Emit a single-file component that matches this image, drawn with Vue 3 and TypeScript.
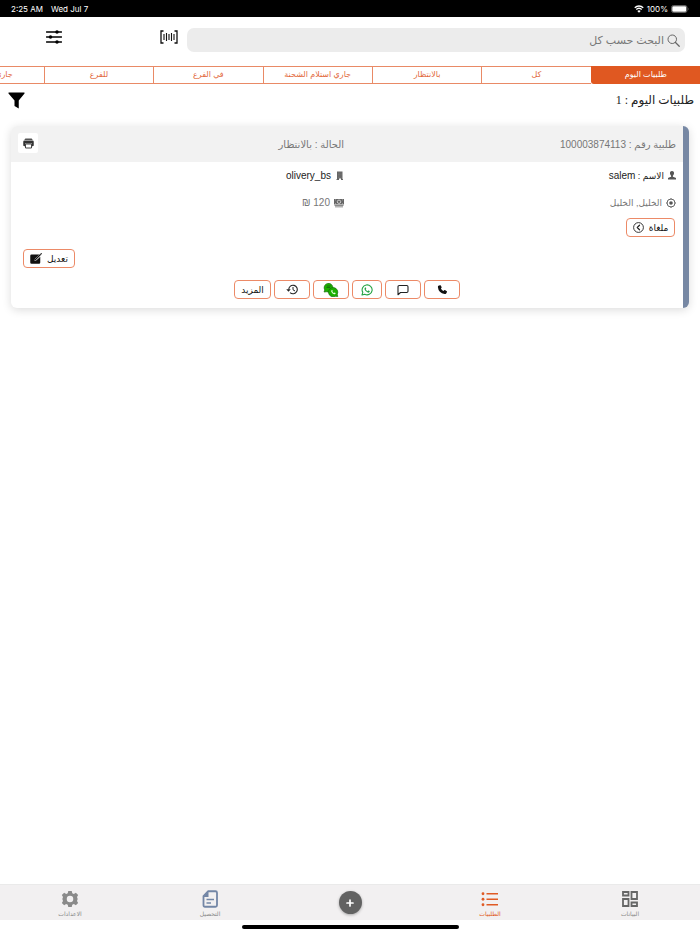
<script setup lang="ts">
import { ref } from 'vue'

interface NavItem {
  id: string
  label: string
}

const tabs: string[] = [
  'طلبيات اليوم',
  'كل',
  'بالانتظار',
  'جاري استلام الشحنة',
  'في الفرع',
  'للفرع',
  'جاري التوصيل',
]
const activeTab = ref(0)
const query = ref('')

const startItems: NavItem[] = [
  { id: 'data', label: 'البيانات' },
  { id: 'orders', label: 'الطلبيات' },
]
const endItems: NavItem[] = [
  { id: 'collect', label: 'التحصيل' },
  { id: 'settings', label: 'الاعدادات' },
]
</script>

<template>
  <div class="page" dir="rtl">
    <div class="status" dir="ltr">
      <span class="clock">2:25 AM</span>
      <span>Wed Jul 7</span>
      <span class="status-end">
        <svg width="10" height="8" viewBox="0 0 20 16" aria-hidden="true">
          <path d="M1.5 5.5a12 12 0 0 1 17 0M4.5 9a8 8 0 0 1 11 0" fill="none" stroke="#fff" stroke-width="2.6" />
          <path d="M10 15.5 6.6 12a4.8 4.8 0 0 1 6.8 0z" fill="#fff" />
        </svg>
        <span>100%</span>
        <svg width="18" height="8" viewBox="0 0 36 16" aria-hidden="true">
          <rect x="1" y="1" width="31" height="14" rx="4" fill="none" stroke="#888" stroke-width="1.4" />
          <rect x="2.500" y="2.500" width="28" height="11" rx="2.500" fill="#fff" />
          <path d="M34 5.500v5q2-2.500 0-5" fill="#888" />
        </svg>
      </span>
    </div>

    <header class="toolbar">
      <label class="search">
        <svg width="13" height="13" viewBox="0 0 26 26" aria-hidden="true">
          <circle cx="10.500" cy="10.500" r="8.500" fill="none" stroke="#666" stroke-width="2" />
          <path d="m17 17 7.500 7.500" stroke="#666" stroke-width="2.400" stroke-linecap="round" />
        </svg>
        <input v-model="query" type="search" placeholder="البحث حسب كل" aria-label="البحث حسب كل" />
      </label>
      <button class="plain scan" type="button" aria-label="مسح الباركود">
        <svg width="18" height="14" viewBox="0 0 36 28" fill="none" stroke="#111" stroke-width="2.600">
          <path d="M7 2H2v24h5M29 2h5v24h-5" />
          <path d="M8 8v12M13 6v16M18 8v12M23 6v16M28 8v12" stroke-width="2.200" />
        </svg>
      </button>
      <button class="plain" type="button" aria-label="خيارات">
        <svg width="16" height="14" viewBox="0 0 32 28" stroke="#000" stroke-width="2.800" stroke-linecap="round">
          <path d="M1 4h30M1 14h30M1 24h30" />
          <g stroke="none"><circle cx="22" cy="4" r="3.500" /><circle cx="9" cy="14" r="3.500" /><circle cx="22" cy="24" r="3.500" /></g>
        </svg>
      </button>
    </header>

    <nav class="tabs">
      <button
        v-for="(tab, i) in tabs"
        :key="tab"
        type="button"
        class="tab"
        :class="{ active: i === activeTab }"
        @click="activeTab = i"
      >{{ tab }}</button>
    </nav>

    <main>
      <div class="heading">
        <h1>طلبيات اليوم : 1</h1>
        <button class="plain" type="button" aria-label="تصفية">
          <svg width="17" height="17" viewBox="0 0 34 34">
            <path d="M2 1h30q2 0 1 2L21.500 17v16L13 28V17L1 3Q0 1 2 1z" />
          </svg>
        </button>
      </div>

      <article class="card">
        <div class="card-head grid">
          <span>طلبية رقم : <bdi>100003874113</bdi></span>
          <span>الحالة : بالانتظار</span>
          <button class="print" type="button" aria-label="طباعة">
            <svg width="11" height="11" viewBox="0 0 22 22">
              <path d="M5 1h12q2 0 2 3H3q0-3 2-3z" fill="#555" />
              <path d="M3 5h16q2.500 0 2.500 2.500v7q0 2-2.500 2h-1V11H4v5.500H3q-2.500 0-2.500-2v-7Q.5 5 3 5z" fill="#333" />
              <path d="M5 12h12v8H5z" fill="#fff" stroke="#444" stroke-width="2" />
            </svg>
          </button>
        </div>

        <div class="grid row dark">
          <span class="field">
            <svg width="8" height="9" viewBox="0 0 18 20" fill="#555" aria-hidden="true">
              <path d="M9 0c3.500 0 5 2.500 4.500 5.500-.3 2.500-1.500 4-2.500 5V13l6 2q1 .5 1 2H0q0-1.500 1-2l6-2v-2.500c-1-1-2.200-2.500-2.500-5C4 2.500 5.500 0 9 0zM0 17h18v2H0z" />
            </svg>
            <span>الاسم : <bdi class="latin">salem</bdi></span>
          </span>
          <span class="field">
            <svg width="9" height="10" viewBox="0 0 18 20" aria-hidden="true">
              <path d="M4 1h11v15h1v2h-4v-3H8v3H3v-2h1z" fill="#666" />
              <path d="M6 4h7M6 7h7M6 10h7M6 13h7" stroke="#888" stroke-dasharray="1.500 1.200" />
            </svg>
            <bdi class="latin">olivery_bs</bdi>
          </span>
        </div>

        <div class="grid row muted">
          <span class="field">
            <svg width="10" height="10" viewBox="0 0 20 20" aria-hidden="true">
              <circle cx="10" cy="10" r="8" fill="none" stroke="#555" stroke-width="1.800" />
              <circle cx="10" cy="10" r="3.600" fill="#555" />
              <path d="M10 0v3M10 17v3M0 10h3M17 10h3" stroke="#555" stroke-width="1.500" />
            </svg>
            <span>الخليل, الخليل</span>
          </span>
          <span class="field">
            <svg width="10" height="10" viewBox="0 0 20 20" aria-hidden="true">
              <path d="M0 2h20v11H0zM1 14.200h18v1.400H1zM2 17h16v1.400H2z" fill="#666" />
              <circle cx="10" cy="7.500" r="3.400" fill="none" stroke="#eee" stroke-width="1.400" />
              <path d="M2 4.500 4 3M18 4.500 16 3M2 10.500 4 12M18 10.500 16 12" stroke="#ddd" />
            </svg>
            <span class="latin">120 ₪</span>
          </span>
        </div>

        <div class="stack">
          <button class="pill labelled" type="button">
            ملغاة
            <svg width="11" height="11" viewBox="0 0 22 22" fill="none" stroke="#222" stroke-width="1.800">
              <circle cx="11" cy="11" r="9.800" />
              <path d="m13 6.500-4.500 4.500 4.500 4.500" stroke-width="2.400" stroke-linecap="round" stroke-linejoin="round" />
            </svg>
          </button>
          <button class="pill labelled edit" type="button">
            تعديل
            <svg width="12" height="11" viewBox="0 0 24 22">
              <path d="M3 3h16l-9 8.500-1 4 4-1 7.500-7v11.500q0 2.500-2.500 2.500H3Q.5 21.500.5 19V5.500Q.5 3 3 3z" fill="#111" />
              <path d="m11 13 9.500-9.500M22 2l.6-.6" stroke="#111" stroke-width="2.200" stroke-linecap="round" />
            </svg>
          </button>
        </div>

        <div class="actions">
          <button class="pill" type="button" aria-label="اتصال">
            <svg width="11" height="11" viewBox="0 0 24 24">
              <path d="M6.500 2.500 3 4Q1.800 5 2 7.200 3.200 19.500 16.800 21.800q2.200.2 3.200-1.300l1.800-3.300q.4-1-.5-1.600l-4-2.300q-.9-.4-1.600.3L14 15.500Q10.500 14 8.500 10L9.800 8q.7-.8.3-1.600L8 3Q7.500 2.100 6.500 2.500z" fill="#111" />
            </svg>
          </button>
          <button class="pill" type="button" aria-label="رسالة">
            <svg width="12" height="12" viewBox="0 0 24 24" fill="none" stroke="#222" stroke-width="2.200" stroke-linejoin="round">
              <path d="M4.500 3h15Q22 3 22 5.500v9q0 2.500-2.500 2.500H7l-5 4.500v-16Q2 3 4.500 3z" />
            </svg>
          </button>
          <button class="pill narrow" type="button" aria-label="واتساب">
            <svg width="12" height="12" viewBox="0 0 24 24">
              <path d="M2 22l1.600-5.300a10 10 0 1 1 3.900 3.800z" fill="none" stroke="#25a244" stroke-width="2.200" stroke-linejoin="round" />
              <path d="M8.300 6.800q.8-.5 1.300.4l.8 1.800q.2.500-.2 1l-.7.900q1.300 2.500 3.800 3.500l1.100-1.200q.4-.4.900-.2l1.900.9q.7.400.4 1.200-.8 2.500-3.400 2.200-5.500-1-7.200-6.600-.2-2.700 1.300-3.900z" fill="#25a244" />
            </svg>
          </button>
          <button class="pill" type="button" aria-label="واتساب للأعمال">
            <svg width="16" height="14" viewBox="0 0 32 28">
              <path d="M2 18 3.500 14a8.800 8.800 0 1 1 4 3.500z" fill="#1db000" stroke="#176b10" stroke-width="1.300" />
              <path d="M7.500 6h8M7 9h7" stroke="#176b10" stroke-width="1.800" />
              <path d="M29.500 27 28.600 22.500a9.300 9.300 0 1 0-4.200 4.200z" fill="#1db000" stroke="#176b10" stroke-width="1.300" />
              <path d="M17.500 14q.9-.5 1.300.3l.7 1.500-.8 1.500q1 2 3 2.800l1.300-1.200 2 .9q.5.500.2 1.200-1 2-3 1.500-4.500-1-5.800-5.500-.2-2 1.100-3z" fill="#e8ffe0" />
            </svg>
          </button>
          <button class="pill" type="button" aria-label="السجل">
            <svg width="12" height="11" viewBox="0 0 24 22">
              <path d="M5.500 11a8.500 8.500 0 1 1 2.600 6.100" fill="none" stroke="#222" stroke-width="2.200" />
              <path d="M.5 10.500h9L5 15.500z" fill="#222" />
              <path d="M14 6v5.500l4 2.500" fill="none" stroke="#222" stroke-width="2" />
            </svg>
          </button>
          <button class="pill text" type="button">المزيد</button>
        </div>
      </article>
    </main>

    <footer>
      <nav class="bottom">
        <a v-for="item in startItems" :key="item.id" href="#" class="nav-item" :class="item.id">
          <svg v-if="item.id === 'data'" width="18" height="18" viewBox="0 0 36 36" fill="none" stroke="#666" stroke-width="3.600">
            <path d="M4 4h11v7H4zM21 4h11v14H21zM4 18h11v14H4zM21 25h11v7H21z" />
          </svg>
          <svg v-else width="18" height="18" viewBox="0 0 36 36" fill="#e05a25">
            <path d="M11 6h23v3H11zM11 17h23v3H11zM11 28h23v3H11z" />
            <circle cx="4" cy="7.500" r="2.800" /><circle cx="4" cy="18.500" r="2.800" /><circle cx="4" cy="29.500" r="2.800" />
          </svg>
          <span>{{ item.label }}</span>
        </a>
        <div class="nav-add">
          <button type="button" aria-label="إضافة">
            <svg width="8" height="8" viewBox="0 0 16 16"><path d="M8 2v12M2 8h12" stroke="#fff" stroke-width="3.400" stroke-linecap="round" /></svg>
          </button>
        </div>
        <a v-for="item in endItems" :key="item.id" href="#" class="nav-item" :class="item.id">
          <svg v-if="item.id === 'collect'" width="18" height="18" viewBox="0 0 36 36">
            <path d="M14 2.500h15q3 0 3 3v25q0 3-3 3H8q-3 0-3-3V12z" fill="none" stroke="#7386a6" stroke-width="3.600" stroke-linejoin="round" />
            <path d="M4 14 15 2v12z" fill="#7386a6" />
            <path d="M11 19h15M11 26h9" stroke="#7386a6" stroke-width="3" />
          </svg>
          <svg v-else width="18" height="18" viewBox="0 0 36 36">
            <path fill="#8a8a8a" fill-rule="evenodd" d="M14.500 2h7l1 4.500 3.200 1.300 4-2.400 4.600 4.700-2.300 4 1.200 3.400v1l-1.200 3.400 2.300 4-4.600 4.700-4-2.400-3.200 1.300-1 4.500h-7l-1-4.500-3.200-1.300-4 2.400-4.600-4.700 2.300-4L2.800 18.500v-1L4 14.100l-2.300-4 4.600-4.700 4 2.400 3.200-1.300zM18 11.500a6.500 6.500 0 1 0 0 13 6.500 6.500 0 0 0 0-13z" />
          </svg>
          <span>{{ item.label }}</span>
        </a>
      </nav>
      <div class="home"></div>
    </footer>
  </div>
</template>

<style>
body {
  background: #fff;
}
</style>

<style scoped>
.page {
  min-height: 100vh;
  display: flex;
  flex-direction: column;
  overflow: hidden;
  color: #222;
  font-family: Inter, 'DejaVu Sans', sans-serif;
  font-size: 10px;
}
button,
input {
  font: inherit;
  color: inherit;
  margin: 0;
  padding: 0;
  border: 0;
}
svg {
  display: block;
  flex: none;
}
.plain {
  background: none;
  display: flex;
  align-items: center;
  justify-content: center;
}
.status {
  display: flex;
  align-items: center;
  gap: 8px;
  height: 17px;
  box-sizing: border-box;
  padding: 0 11px;
  background: #000;
  color: #fff;
  font-size: 8px;
}
.status-end {
  display: flex;
  align-items: center;
  gap: 3px;
  margin-left: auto;
}
.toolbar {
  display: grid;
  grid-template-columns: minmax(0, 1fr) 79px 108px;
  padding: 11px 15px 14px 0;
  height: 24px;
}
.search {
  display: flex;
  align-items: center;
  gap: 3px;
  padding: 0 5px;
  border-radius: 7px;
  background: #ececec;
}
.search input {
  flex: 1;
  min-width: 0;
  background: none;
  outline: none;
  appearance: none;
  font-size: 11px;
}
.search input::placeholder {
  color: #777;
}
.scan {
  justify-content: flex-start;
  padding: 0 9px;
}
.toolbar .plain {
  height: 18px;
}
.tabs {
  display: flex;
  height: 18px;
  overflow: hidden;
}
.tab {
  flex: 0 0 15.625%;
  box-sizing: border-box;
  padding-bottom: 2px;
  border: 1px solid #e98a66;
  border-right-width: 0;
  background: #fff;
  color: #e2683c;
  font-size: 8px;
  white-space: nowrap;
}
.tab.active {
  background: #e05821;
  border-color: #e05821;
  border-radius: 0 0 0 3px;
  color: #fff;
}
.heading {
  display: flex;
  align-items: center;
  justify-content: space-between;
  height: 32px;
  padding: 0 6px 0 8px;
}
h1 {
  margin: 0;
  font-family: 'Liberation Serif', 'DejaVu Sans', serif;
  font-size: 12px;
  font-weight: 400;
}
.card {
  margin: 10px 11px 0;
  border-right: 6px solid #7788a4;
  border-radius: 6px;
  box-shadow: 0 2px 10px rgba(0, 0, 0, 0.14);
  overflow: hidden;
  background: #fff;
  font-family: 'Liberation Sans', 'DejaVu Sans', sans-serif;
}
.grid {
  display: grid;
  grid-template-columns: 1fr 1fr;
  column-gap: 6px;
  align-items: center;
  padding: 0 7px;
}
.card-head {
  position: relative;
  height: 36px;
  background: #f2f2f2;
  color: #777;
}
.print {
  position: absolute;
  left: 7px;
  top: 7px;
  width: 20px;
  height: 20px;
  display: flex;
  align-items: center;
  justify-content: center;
  background: #fff;
  border-radius: 2px;
}
.row {
  height: 27px;
  font-size: 9px;
}
.latin {
  font-size: 10px;
}
.dark {
  color: #222;
}
.muted {
  color: #777;
}
.field {
  display: flex;
  align-items: center;
  gap: 4px;
}
.stack {
  display: flex;
  flex-direction: column;
  align-items: flex-start;
  gap: 12px;
  padding: 2px 8px 0 12px;
}
.pill {
  display: flex;
  align-items: center;
  justify-content: center;
  box-sizing: border-box;
  width: 36px;
  height: 19px;
  border: 1px solid #ec8a67;
  border-radius: 4px;
  background: #fff;
  color: #111;
  font-size: 9px;
}
.narrow {
  width: 30px;
}
.text {
  width: 37px;
}
.labelled {
  width: auto;
  min-width: 49px;
  gap: 5px;
}
.edit {
  align-self: flex-end;
  min-width: 52px;
}
.actions {
  display: flex;
  justify-content: center;
  gap: 3px;
  padding: 12px 0 9px;
}
main {
  flex: 1;
}
.bottom {
  display: grid;
  grid-template-columns: repeat(5, 1fr);
  height: 35px;
  background: #f2f0f1;
  border-top: 1px solid #eaeaea;
}
.nav-item {
  display: flex;
  flex-direction: column;
  align-items: center;
  gap: 2px;
  padding-top: 5px;
  color: #888;
  font-size: 6px;
  line-height: 8px;
  text-decoration: none;
}
.orders {
  color: #e05a25;
}
.nav-add {
  display: flex;
  align-items: center;
  justify-content: center;
}
.nav-add button {
  display: flex;
  align-items: center;
  justify-content: center;
  width: 23px;
  height: 23px;
  border-radius: 50%;
  background: #626262;
  box-shadow: 0 1px 3px rgba(0, 0, 0, 0.3);
}
.home {
  width: 31%;
  height: 4px;
  margin: 5px auto;
  border-radius: 2px;
  background: #000;
}
</style>
